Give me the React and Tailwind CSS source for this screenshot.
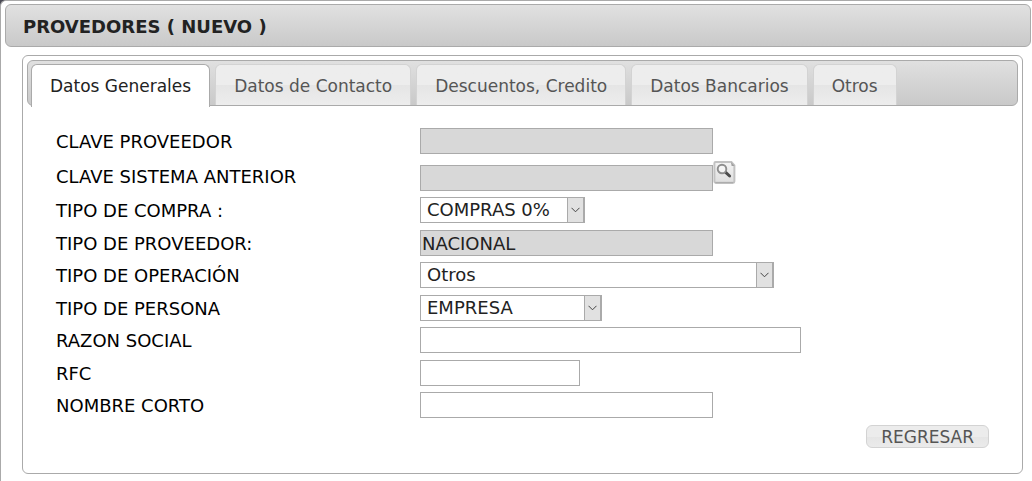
import { useState } from 'react';

const tabs = ['Datos Generales', 'Datos de Contacto', 'Descuentos, Credito', 'Datos Bancarios', 'Otros'];

const rows = [
  { id: 'clave', label: 'CLAVE PROVEEDOR', kind: 'readonly', width: 'w-[293px]', value: '' },
  { id: 'anterior', label: 'CLAVE SISTEMA ANTERIOR', kind: 'lookup', width: 'w-[293px]', value: '' },
  { id: 'compra', label: 'TIPO DE COMPRA :', kind: 'select', width: 'w-[165px]', value: 'COMPRAS 0%' },
  { id: 'proveedor', label: 'TIPO DE PROVEEDOR:', kind: 'readonly', width: 'w-[293px]', value: 'NACIONAL' },
  { id: 'operacion', label: 'TIPO DE OPERACIÓN', kind: 'select', width: 'w-[354px]', value: 'Otros' },
  { id: 'persona', label: 'TIPO DE PERSONA', kind: 'select', width: 'w-[182px]', value: 'EMPRESA' },
  { id: 'razon', label: 'RAZON SOCIAL', kind: 'text', width: 'w-[381px]' },
  { id: 'rfc', label: 'RFC', kind: 'text', width: 'w-[160px]' },
  { id: 'corto', label: 'NOMBRE CORTO', kind: 'text', width: 'w-[293px]' },
];

function SearchIcon() {
  return (
    <svg viewBox="0 0 23 23" className="block size-[23px]" aria-hidden="true">
      <defs>
        <linearGradient id="sheet" x1="0" y1="0" x2="0" y2="1">
          <stop offset="0" stopColor="#f4f4f4" />
          <stop offset="1" stopColor="#dedede" />
        </linearGradient>
      </defs>
      <path d="M2.5 1H18.4L21.4 4.4V20.3Q21.4 21.8 20 21.8H2.8Q1.4 21.8 1.4 20.3V2.3Q1.4 1 2.5 1Z" fill="url(#sheet)" stroke="#c2c2c2" strokeWidth="2" />
      <path d="M2.3 21.8H20.3" stroke="#a8a8a8" strokeWidth="1.2" />
      <path d="M18 1L21.6 5H18.6Z" fill="#a0a0a0" />
      <path d="M12.4 11.2L16.6 15" stroke="#4c4c4c" strokeWidth="3" strokeLinecap="round" />
      <circle cx="9" cy="8" r="4.3" fill="#f5f5f5" stroke="#8e8e8e" strokeWidth="1.9" />
    </svg>
  );
}

function Field({ row }) {
  const box = 'h-[26px] border border-[#aaa] px-px leading-6 text-[#222] outline-none ';
  if (row.kind === 'select') {
    return (
      <div className={'relative ' + row.width}>
        <select id={row.id} className="block h-[26px] w-full appearance-none rounded-none border border-[#aaa] bg-white pr-5 pl-1.5 leading-6 text-[#222] outline-none">
          <option>{row.value}</option>
        </select>
        <span className="pointer-events-none absolute inset-y-0 right-0 flex w-[18px] items-center justify-center border border-r-2 border-[#aaa] bg-[#e1e1e1]">
          <svg viewBox="0 0 9 6" className="h-1.5 w-[9px]" fill="none" stroke="#444" aria-hidden="true">
            <path d="M.5 .8L4.5 4.8L8.5 .8" />
          </svg>
        </span>
      </div>
    );
  }
  if (row.kind === 'lookup') {
    return (
      <div className="flex h-[30px] items-end">
        <input id={row.id} type="text" readOnly defaultValue={row.value} className={box + 'bg-[#d8d8d8] ' + row.width} />
        <button type="button" aria-label="Buscar" className="self-start">
          <SearchIcon />
        </button>
      </div>
    );
  }
  if (row.kind === 'readonly') {
    return <input id={row.id} type="text" readOnly defaultValue={row.value} className={box + 'bg-[#d8d8d8] ' + row.width} />;
  }
  return <input id={row.id} type="text" className={box + 'bg-white ' + row.width} />;
}

export default function App() {
  const [active, setActive] = useState(0);
  return (
    <div className="min-h-screen bg-[#4a4a55] font-['Verdana','DejaVu_Sans',sans-serif] text-[17px] leading-6">
      <main className="min-h-screen rounded-tl-md border-t border-l border-[#aaa] bg-white pt-[3px] pr-px pb-[7px] pl-1">
        <header className="flex h-[43px] items-center rounded-md border border-[#aaa] bg-linear-to-b from-[#e1e1e1] to-[#c9c9c9] px-[17px] pt-0.5">
          <h1 className="text-[18px] font-bold text-[#222]">PROVEDORES ( NUEVO )</h1>
        </header>

        <section className="mt-2 mr-2 ml-[17px] rounded-md border border-[#aaa] p-1 pb-[25px]">
          <div role="tablist" className="flex h-[46px] items-start gap-[5px] rounded-md border border-[#aaa] bg-linear-to-b from-[#e0e0e0] to-[#c9c9c9] px-[3px] pt-[3px]">
            {tabs.map((tab, i) => (
              <button
                key={tab}
                type="button"
                role="tab"
                aria-selected={i === active}
                onClick={() => setActive(i)}
                className={
                  'rounded-t-md border border-b-0 px-[18px] whitespace-nowrap ' +
                  (i === active
                    ? 'z-10 h-[43px] border-[#aaa] bg-white text-[#222]'
                    : 'h-[41px] border-[#d3d3d3] bg-linear-to-b from-[#ededed] from-50% via-[#e5e5e5] via-50% to-[#ededed] pt-0.5 text-[#555]')
                }
              >
                {tab}
              </button>
            ))}
          </div>

          <form className="pt-[22px] pr-[29px] pl-[29px] text-[18px]">
            {rows.map((row) => (
              <div key={row.id} className="grid grid-cols-[364px_1fr] items-center odd:pb-[7px] even:pb-1.5">
                <label htmlFor={row.id} className="pt-0.5 leading-6 text-black">
                  {row.label}
                </label>
                <Field row={row} />
              </div>
            ))}
            <div className="flex justify-end">
              <button type="button" className="h-[23px] rounded-md border border-[#d3d3d3] bg-linear-to-b from-[#ececec] from-50% via-[#e5e5e5] via-50% to-[#ebebeb] px-3.5 text-[17px] leading-5 text-[#555]">
                REGRESAR
              </button>
            </div>
          </form>
        </section>
      </main>
    </div>
  );
}
